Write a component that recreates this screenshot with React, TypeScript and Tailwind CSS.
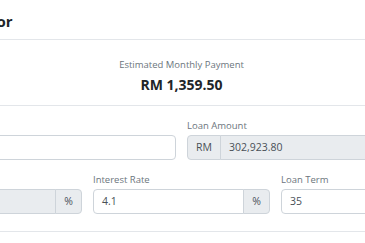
import React from 'react';

function Field({ label, value, prefix, suffix, disabled }: { label: string; value: string; prefix?: string; suffix?: string; disabled?: boolean }) {
    return (
        <div className="flex flex-col">
            <label className="text-[9.5px] leading-[12px] text-[#6c757d] mb-[3px]">{label}</label>
            <div className="flex h-[25px]">
                {prefix && (
                    <span className="flex items-center px-[8px] bg-[#e9ecef] border border-[#ced4da] rounded-l-[4px] text-[10.5px] text-[#495057]">
                        {prefix}
                    </span>
                )}
                <div
                    className={
                        'flex-1 flex items-center px-[8px] border border-[#ced4da] text-[10.5px] text-[#495057] ' +
                        (disabled ? 'bg-[#e9ecef] ' : 'bg-white ') +
                        (prefix ? '-ml-px ' : 'rounded-l-[4px] ') +
                        (suffix ? '' : 'rounded-r-[4px]')
                    }
                >
                    {value}
                </div>
                {suffix && (
                    <span className="flex items-center px-[8px] -ml-px bg-[#e9ecef] border border-[#ced4da] rounded-r-[4px] text-[10.5px] text-[#495057]">
                        {suffix}
                    </span>
                )}
            </div>
        </div>
    );
}

export default function App() {
    return (
        <div className="w-[365px] h-[243px] overflow-hidden bg-white font-['Open_Sans',sans-serif]">
            <div className="ml-[-111px] w-[585px]">
                {/* Header */}
                <div className="h-[40px] pt-[3px] pl-[6px] pr-4 flex items-center border-b border-[#e3e6ea]">
                    <h3 className="text-[15px] font-bold text-[#212529]">Loan Calculator</h3>
                </div>

                {/* Body */}
                <div className="px-4">
                    <div className="pt-[17px] pb-[10px] flex flex-col items-center">
                        <span className="text-[9.5px] leading-[16px] text-[#6c757d]">Estimated Monthly Payment</span>
                        <span className="mt-[2px] text-[14px] leading-[20px] font-bold text-[#212529]">RM 1,359.50</span>
                    </div>
                    <div className="border-t border-[#e3e6ea]" />

                    <div className="pt-[14px] grid grid-cols-2 gap-x-[11px]">
                        <Field label="Purchase Price" value="" />
                        <Field label="Loan Amount" value="302,923.80" prefix="RM" disabled />
                    </div>

                    <div className="pt-[14px] grid grid-cols-3 gap-x-[11px]">
                        <Field label="Margin of Finance" value="" suffix="%" disabled />
                        <Field label="Interest Rate" value="4.1" suffix="%" />
                        <Field label="Loan Term" value="35" />
                    </div>

                    <div className="mt-[17px] border-t border-[#e3e6ea]" />
                </div>
            </div>
        </div>
    );
}
